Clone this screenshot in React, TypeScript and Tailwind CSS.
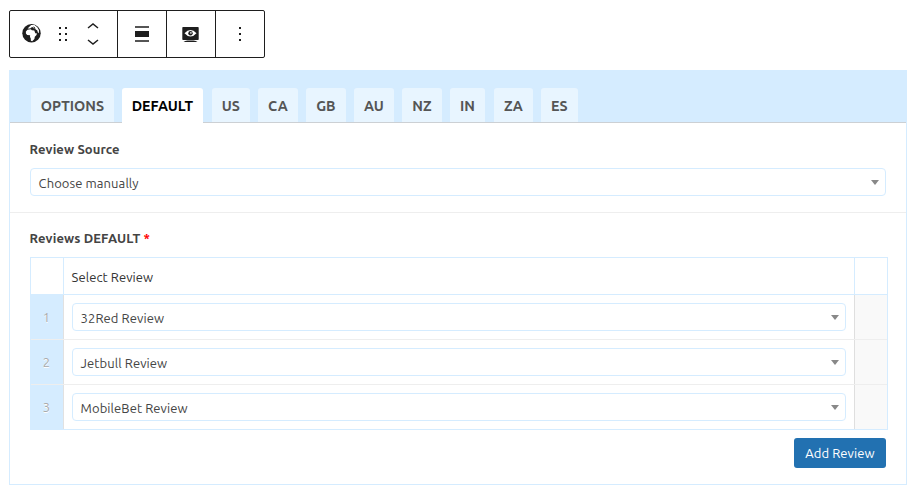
import React from "react";

const tabs = [
  { label: "OPTIONS", box: "w-[83px] mr-2" },
  { label: "DEFAULT", box: "w-[81px] mr-[9px]", active: true },
  { label: "US", box: "w-[38px] mr-2" },
  { label: "CA", box: "w-10 mr-2" },
  { label: "GB", box: "w-10 mr-2" },
  { label: "AU", box: "w-10 mr-2" },
  { label: "NZ", box: "w-10 mr-2" },
  { label: "IN", box: "w-[35px] mr-[9px]" },
  { label: "ZA", box: "w-[39px] mr-2" },
  { label: "ES", box: "w-[37px]" },
];

const reviews = ["32Red Review", "Jetbull Review", "MobileBet Review"];

function Select({ value }: { value: string }) {
  return (
    <div className="flex h-7 items-center justify-between rounded-[4px] border border-[#d5ecff] bg-white pl-[7.6px] pr-[6px]">
      <span className="pt-[2px] leading-[18px] tracking-[0.08px] text-[#444]">{value}</span>
      <svg width="8" height="5" viewBox="0 0 8 5" className="mt-px">
        <path d="M0 0h8L4 5z" fill="#888" />
      </svg>
    </div>
  );
}

function Toolbar() {
  return (
    <div className="flex h-12 w-64 rounded-[2px] border border-[#1e1e1e] text-[#1e1e1e]">
      <div className="flex w-[108px] items-center border-r border-[#1e1e1e]">
        <svg width="20" height="20" viewBox="0 0 20 20" className="-mt-[3px] ml-[11px]">
          <circle cx="10.5" cy="10.3" r="9.2" fill="#1e1e1e" />
          <path d="M4.9 8.4 6.5 6.7l3.2-.4 1.2 1 2.4.2 1 2.8 1.8.2-.8 1.8-1.5 1.5-.4 2.2-2.2 2.3-1.3-.5-.2-2.5-.7-1.2.1-1.8-2.9-.2-1.3-1.6z" fill="#fff" />
          <path d="M6.6 5.4 8.1 3.9l2-1.9 3.4.1 2.8 2.1 1.7 3-.2 3.1-.9-.7-.7-2.3-1.5-.8-.6-1.2-1.6-.1-.9-1.1-1.3.3-1.1 1z" fill="#fff" />
          <path d="m12 3.6 1.5.5.8 1.2-1.4-.2z" fill="#1e1e1e" />
        </svg>
        <svg width="8" height="14" viewBox="0 0 8 14" className="ml-[18px]" fill="#1e1e1e">
          <path d="M0 0h2v2H0zM6 0h2v2H6zM0 6h2v2H0zM6 6h2v2H6zM0 12h2v2H0zM6 12h2v2H6z" />
        </svg>
        <svg width="12" height="22" viewBox="0 0 12 22" className="ml-5" fill="none" stroke="#1e1e1e" strokeWidth="1.5">
          <path d="M1 5 6 1l5 4M1 17l5 4 5-4" />
        </svg>
      </div>
      <div className="flex w-[49px] items-center justify-center border-r border-[#1e1e1e]">
        <svg width="14" height="16" viewBox="0 0 14 16">
          <path d="M0 0h14v2H0zM0 14h14v2H0z" fill="#555" />
          <path d="M0 5h14v6H0z" fill="#1e1e1e" />
        </svg>
      </div>
      <div className="flex w-[49px] items-center justify-center border-r border-[#1e1e1e] pr-[1px]">
        <svg width="17" height="15" viewBox="0 0 17 15" className="mt-px">
          <rect x=".3" y="0" width="16.4" height="13" rx=".8" fill="#1e1e1e" />
          <path d="M1.5 15Q3 13.6 5.5 13.4h6Q14 13.6 15.5 15z" fill="#1e1e1e" />
          <path d="M2.5 6.3Q8.5-.3 14.5 6.3 8.5 12.9 2.5 6.3z" fill="#fff" />
          <circle cx="8.5" cy="6.3" r="2.2" fill="#1e1e1e" />
          <circle cx="8.9" cy="5.9" r=".8" fill="#fff" />
        </svg>
      </div>
      <div className="flex flex-1 items-center justify-center">
        <svg width="2" height="14" viewBox="0 0 2 14" fill="#1e1e1e">
          <path d="M0 0h2v2H0zM0 6h2v2H0zM0 12h2v2H0z" />
        </svg>
      </div>
    </div>
  );
}

export default function App() {
  return (
    <div className="h-[494px] w-[920px] overflow-hidden bg-white pl-[9px] pt-[10px] font-['Ubuntu','Noto_Sans',sans-serif] text-[13px] text-[#444]">
      <Toolbar />
      <div className="mt-3 h-[415px] w-[898px] border border-[#d5ecff]">
        <div className="flex h-[52px] items-end border-b border-[#ccd0d4] bg-[#d5ecff] pl-[21px]">
          {tabs.map((t) => (
            <div
              key={t.label}
              className={`flex shrink-0 items-center justify-center rounded-t-[3px] text-[14.3px] font-bold ${t.box} ${
                t.active ? "-mb-px h-[35px] bg-white pb-px text-black" : "h-[34px] bg-[#e8f5ff] text-[#555]"
              }`}
            >
              <span className="pr-[0.2px] pt-[2px] leading-5">{t.label}</span>
            </div>
          ))}
        </div>

        <div className="h-[90px] border-b border-[#eee] pl-5 pr-5 pt-[17px]">
          <div className="-ml-[0.4px] mb-[10px] h-[18px] font-bold leading-[18px] tracking-[0.1px]">Review Source</div>
          <Select value="Choose manually" />
        </div>

        <div className="pl-5 pr-[18px] pt-4">
          <div className="-ml-[0.4px] mb-[10px] h-[18px] font-bold leading-[18px] tracking-[0.11px]">
            Reviews DEFAULT <span className="text-[#f00]">*</span>
          </div>
          <div className="border border-[#d5ecff]">
            <div className="flex h-[37px] border-b border-[#d5ecff] text-[#333]">
              <div className="w-[33px] border-r border-[#d5ecff]" />
              <div className="flex flex-1 items-center border-r border-[#d5ecff] pl-[7.5px] pt-[3px] tracking-[0.08px]">Select Review</div>
              <div className="w-8" />
            </div>
            {reviews.map((name, i) => (
              <div key={name} className={`flex ${i < 2 ? "h-[45px] border-b border-[#eee]" : "h-[44px]"}`}>
                <div className="flex w-[33px] items-center justify-center border-r border-[#e1e1e1] bg-[#d5ecff] pr-px pt-px text-[#aaa] [text-shadow:0_1px_0_#fff]">
                  {i + 1}
                </div>
                <div className="flex-1 border-r border-[#dfdfdf] p-2">
                  <Select value={name} />
                </div>
                <div className="w-8 bg-[#f9f9f9]" />
              </div>
            ))}
          </div>
          <div className="mr-[2px] mt-2 flex justify-end">
            <button className="h-[30px] w-[92px] rounded-[3px] bg-[#2271b1] pt-[2px] text-[13px] tracking-[0.08px] text-white">Add Review</button>
          </div>
        </div>
      </div>
    </div>
  );
}
